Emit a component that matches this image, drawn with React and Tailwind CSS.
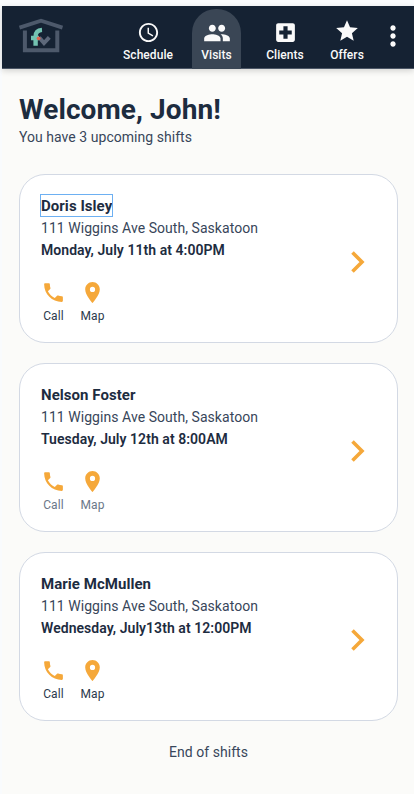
import React from 'react';
import {
  MdSchedule,
  MdLocalHospital,
  MdStar,
  MdMoreVert,
  MdLocationOn,
} from 'react-icons/md';

const shifts = [
  { name: 'Doris Isley', address: '111 Wiggins Ave South, Saskatoon', time: 'Monday, July 11th at 4:00PM', focused: true },
  { name: 'Nelson Foster', address: '111 Wiggins Ave South, Saskatoon', time: 'Tuesday, July 12th at 8:00AM', muted: true },
  { name: 'Marie McMullen', address: '111 Wiggins Ave South, Saskatoon', time: 'Wednesday, July13th at 12:00PM' },
];

const Logo = () => (
  <svg className="mt-[12px] ml-[16px] h-[36px] w-[46px] shrink-0" viewBox="18 18 46 36" fill="none">
    <path d="M19.5 27.6 L41 20.8 L62.5 27.6" stroke="#4d596b" strokeWidth="3.8" />
    <path d="M24.9 30.5 V50.2 H57.3 V30.5" stroke="#4d596b" strokeWidth="4" />
    <path d="M39.2 37.5 L44 43 L49.3 37.3" stroke="#5d687a" strokeWidth="4" />
    <path d="M42 29.9 C37.5 30.2 35.6 32.5 35.6 36.5 V45.8 M31 38 H39" stroke="#73c2b1" strokeWidth="4.4" />
    <circle cx="38.6" cy="38.3" r="1.9" fill="#e0654f" />
  </svg>
);

const PeopleIcon = () => (
  <svg className="mt-[2px] ml-[1px] size-[28px]" viewBox="0 0 24 24" fill="currentColor">
    <path d="M16 11c1.66 0 2.99-1.34 2.99-3S17.66 5 16 5s-3 1.34-3 3 1.34 3 3 3zm-8 0c1.66 0 2.99-1.34 2.99-3S9.66 5 8 5 5 6.34 5 8s1.34 3 3 3zm0 2c-2.33 0-7 1.17-7 3.5V19h14v-2.5c0-2.33-4.67-3.5-7-3.5zm8 0c-.29 0-.62.02-.97.05 1.16.84 1.97 1.97 1.97 3.45V19h6v-2.5c0-2.33-4.67-3.5-7-3.5z" />
  </svg>
);

const PhoneIcon = () => (
  <svg className="size-[25px] text-[#f5a83a]" viewBox="0 0 24 24" fill="currentColor">
    <path d="M6.62 10.79c1.44 2.83 3.76 5.14 6.59 6.59l2.2-2.2c.27-.27.67-.36 1.02-.24 1.12.37 2.33.57 3.57.57.55 0 1 .45 1 1V20c0 .55-.45 1-1 1-9.39 0-17-7.61-17-17 0-.55.45-1 1-1h3.5c.55 0 1 .45 1 1 0 1.25.2 2.45.57 3.57.11.35.03.74-.25 1.02l-2.2 2.2z" />
  </svg>
);

const NavItem = ({ icon, label, className }) => (
  <button className={`flex shrink-0 flex-col items-center text-[#fafafa] ${className}`}>
    <span className="flex h-[32px] items-center justify-center">{icon}</span>
    <span className="text-[12px] leading-[14px] font-medium tracking-[0.05px] whitespace-nowrap">{label}</span>
  </button>
);

const Header = () => (
  <header className="relative flex h-[63px] items-start border-b border-[#4b5666] bg-[#152233] shadow-[0_2px_6px_rgba(0,0,0,0.16)]">
    <Logo />
    <NavItem className="mt-[10px] ml-[54px] w-[60px]" label="Schedule" icon={<MdSchedule size={23} />} />
    <NavItem
      className="mt-[3px] ml-[14px] h-[60px] w-[49px] rounded-t-[24px] bg-[#3a4655] pt-[7px]"
      label="Visits"
      icon={<PeopleIcon />}
    />
    <NavItem className="mt-[10px] ml-[19px] w-[50px]" label="Clients" icon={<MdLocalHospital size={25} />} />
    <NavItem className="mt-[10px] ml-[12px] w-[50px]" label="Offers" icon={<MdStar size={26} className="-mt-[3px]" />} />
    <button className="mt-[14px] ml-[5px] text-[#fafafa]">
      <MdMoreVert size={32} />
    </button>
  </header>
);

const ShiftCard = ({ shift }) => (
  <div className="flex h-[169px] items-start justify-between rounded-[26px] border-[1.5px] border-[#d3d9e4] bg-white pt-[20px] pr-[31px] pl-[21px]">
    <div>
      <p className="h-[22px] text-[15px] leading-[22px] font-bold tracking-[0.05px]">
        <span className={`inline-block h-[21px] leading-[22px] ${shift.focused ? 'outline outline-[#6db0f2]' : ''}`}>
          {shift.name}
        </span>
      </p>
      <p className="text-[14px] leading-[22px] tracking-[0.05px] whitespace-nowrap text-[#38465a]">{shift.address}</p>
      <p className="text-[14px] leading-[22px] font-semibold tracking-[0.05px] whitespace-nowrap">{shift.time}</p>

      <div className={`mt-[19px] flex text-[12px] leading-[14px] tracking-[0.1px] ${shift.muted ? 'text-[#6b7789]' : 'text-[#2c3a4d]'}`}>
        <button className="flex w-[25px] flex-col items-center">
          <PhoneIcon />
          <span className="mt-[4px]">Call</span>
        </button>
        <button className="ml-[14px] flex w-[25px] flex-col items-center">
          <MdLocationOn size={25} className="text-[#f5a83a]" />
          <span className="mt-[4px]">Map</span>
        </button>
      </div>
    </div>

    <svg className="mt-[55px] h-[24px] w-[16px]" viewBox="0 0 16 24" fill="none">
      <path d="M2.5 2.5 L12 12 L2.5 21.5" stroke="#f5a83a" strokeWidth="3.6" />
    </svg>
  </div>
);

const App = () => {
  return (
    <div className="h-[794px] w-[414px] overflow-hidden bg-[#f9fbfd] pt-[6px] pl-[2px] font-['Roboto',sans-serif] text-[#1d2c3f]">
      <div className="h-[788px] bg-[#fbfbf9]">
        <Header />

        <main className="pr-[16px] pl-[17px]">
          <h1 className="mt-[24px] text-[28px] leading-[34px] font-bold tracking-[0.1px] whitespace-nowrap">Welcome, John!</h1>
          <p className="mt-[1px] text-[14px] leading-[18px] tracking-[0.04px] text-[#38465a]">You have 3 upcoming shifts</p>

          <div className="mt-[28px] flex flex-col gap-5">
            {shifts.map((shift) => (
              <ShiftCard key={shift.name} shift={shift} />
            ))}
          </div>

          <p className="mt-[22px] text-center text-[14px] leading-[18px] tracking-[0.05px] text-[#38465a]">End of shifts</p>
        </main>
      </div>
    </div>
  );
};

export default App;
